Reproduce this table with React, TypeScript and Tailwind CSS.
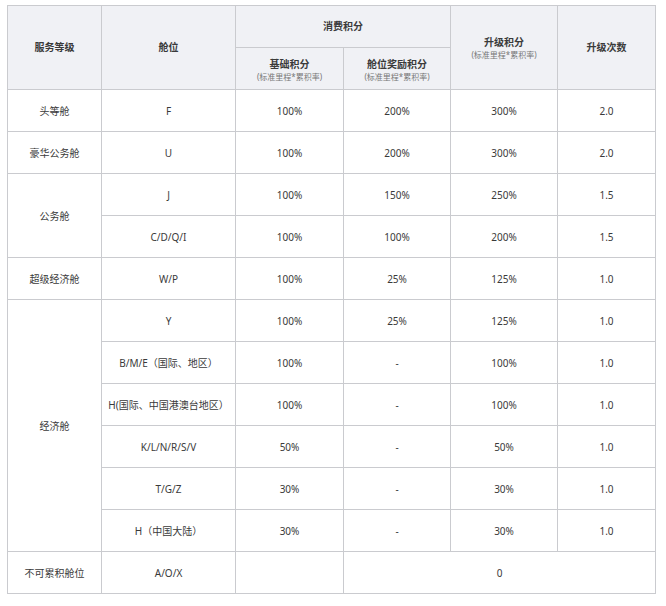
const body = [
  { grade: "头等舱", span: 1, cls: "F", base: "100%", bonus: "200%", up: "300%", times: "2.0" },
  { grade: "豪华公务舱", span: 1, cls: "U", base: "100%", bonus: "200%", up: "300%", times: "2.0" },
  { grade: "公务舱", span: 2, cls: "J", base: "100%", bonus: "150%", up: "250%", times: "1.5" },
  { cls: "C/D/Q/I", base: "100%", bonus: "100%", up: "200%", times: "1.5" },
  { grade: "超级经济舱", span: 1, cls: "W/P", base: "100%", bonus: "25%", up: "125%", times: "1.0" },
  { grade: "经济舱", span: 6, cls: "Y", base: "100%", bonus: "25%", up: "125%", times: "1.0" },
  { cls: "B/M/E（国际、地区）", base: "100%", bonus: "-", up: "100%", times: "1.0" },
  { cls: "H(国际、中国港澳台地区）", base: "100%", bonus: "-", up: "100%", times: "1.0" },
  { cls: "K/L/N/R/S/V", base: "50%", bonus: "-", up: "50%", times: "1.0" },
  { cls: "T/G/Z", base: "30%", bonus: "-", up: "30%", times: "1.0" },
  { cls: "H（中国大陆）", base: "30%", bonus: "-", up: "30%", times: "1.0" },
]

const td = "border border-[#cacbcf] text-center align-middle p-0 pt-[2px]"
const th = "border border-[#cacbcf] text-center align-middle p-0 bg-[#f0f1f5] font-bold"

function Sub() {
  return <div className="text-[8px] leading-[12px] font-normal text-[#777]">(标准里程*累积率)</div>
}

export default function App() {
  return (
    <div className="bg-white min-h-screen pt-[5px] pl-[7px] text-[#3a3a3a] text-[10px] [font-family:'Noto_Sans','Noto_Sans_CJK_SC',sans-serif]">
      <table className="table-fixed border-collapse w-[648px]">
        <colgroup>
          <col className="w-[94px]" />
          <col className="w-[134px]" />
          <col className="w-[108px]" />
          <col className="w-[107px]" />
          <col className="w-[107px]" />
          <col className="w-[98px]" />
        </colgroup>
        <thead>
          <tr className="h-[42px]">
            <th rowSpan={2} className={th}>服务等级</th>
            <th rowSpan={2} className={th}>舱位</th>
            <th colSpan={2} className={th}>消费积分</th>
            <th rowSpan={2} className={th}>
              <div className="leading-[14px]">升级积分</div>
              <Sub />
            </th>
            <th rowSpan={2} className={th}>升级次数</th>
          </tr>
          <tr className="h-[42px]">
            <th className={th}>
              <div className="leading-[14px] pt-[2px]">基础积分</div>
              <Sub />
            </th>
            <th className={th}>
              <div className="leading-[14px] pt-[2px]">舱位奖励积分</div>
              <Sub />
            </th>
          </tr>
        </thead>
        <tbody>
          {body.map((r, i) => (
            <tr key={i} className="h-[42px]">
              {r.grade && (
                <td rowSpan={r.span} className={td}>
                  {r.grade}
                </td>
              )}
              <td className={td}>{r.cls}</td>
              <td className={td}>{r.base}</td>
              <td className={td}>{r.bonus}</td>
              <td className={td}>{r.up}</td>
              <td className={td}>{r.times}</td>
            </tr>
          ))}
          <tr className="h-[42px]">
            <td className={td}>不可累积舱位</td>
            <td className={td}>A/O/X</td>
            <td className={td}></td>
            <td colSpan={3} className={td}>0</td>
          </tr>
        </tbody>
      </table>
    </div>
  )
}
